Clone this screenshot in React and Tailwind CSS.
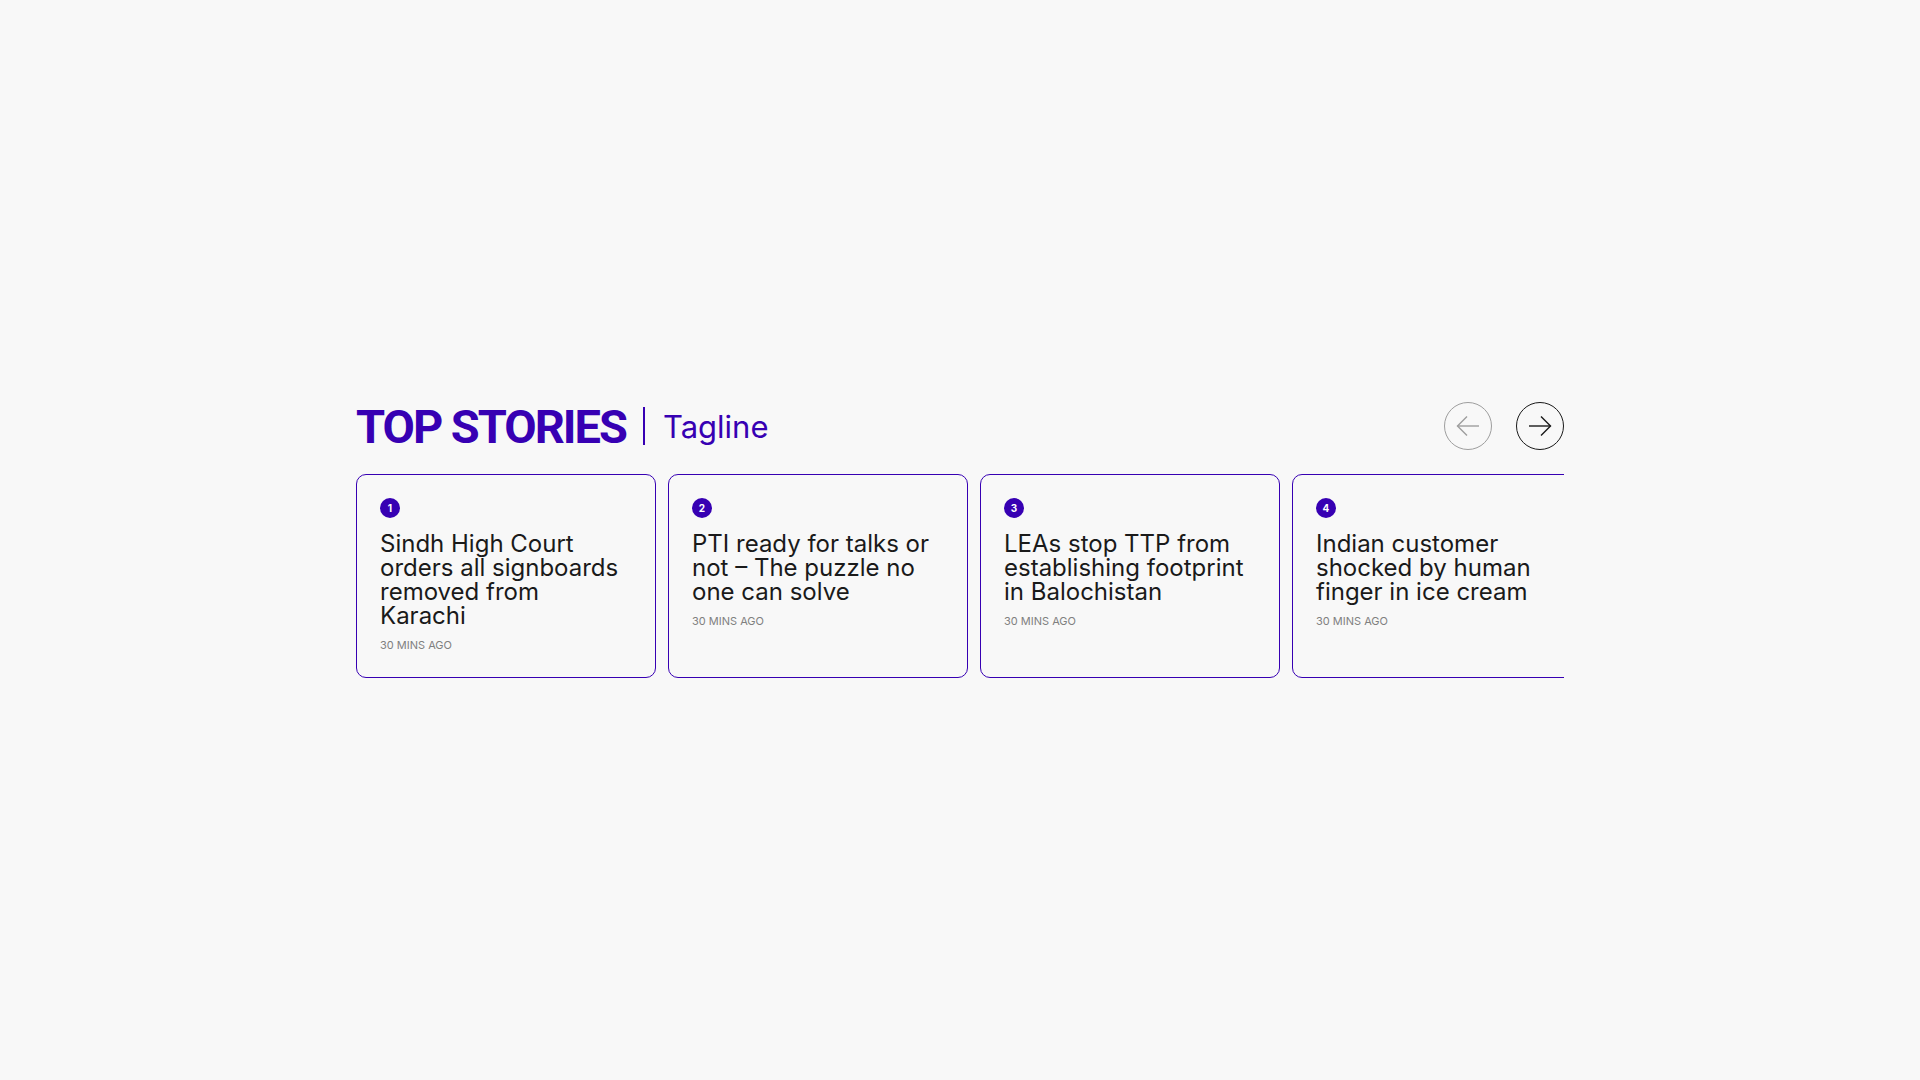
import React from "react";

const stories = [
  { n: 1, title: "Sindh High Court orders all signboards removed from Karachi" },
  { n: 2, title: "PTI ready for talks or not – The puzzle no one can solve" },
  { n: 3, title: "LEAs stop TTP from establishing footprint in Balochistan" },
  { n: 4, title: "Indian customer shocked by human finger in ice cream" },
];

function Arrow({ dir }) {
  return (
    <svg width="24" height="24" viewBox="0 0 24 24" fill="none" stroke="currentColor" strokeWidth="1.4" strokeLinecap="butt" strokeLinejoin="miter">
      {dir === "left" ? (
        <>
          <path d="M23 12H1.5" />
          <path d="M11 2.5L1.5 12l9.5 9.5" />
        </>
      ) : (
        <>
          <path d="M1 12h21.5" />
          <path d="M13 2.5l9.5 9.5-9.5 9.5" />
        </>
      )}
    </svg>
  );
}

export default function App() {
  return (
    <div className="min-h-screen w-full bg-[#f8f8f8] flex items-start justify-center" style={{ fontFamily: "Inter, 'Noto Sans', sans-serif" }}>
      <div className="w-[1208px] mt-[402px] flex flex-col gap-6">
        <div className="flex items-center justify-between h-12">
          <div className="flex items-center">
            <h2 className="text-[47px] leading-none font-bold text-[#3700b3] tracking-[-2px] uppercase" style={{ fontFamily: "Roboto, 'Liberation Sans', sans-serif" }}>
              Top Stories
            </h2>
            <div className="w-[2px] h-[38px] bg-[#3700b3] ml-[17px] mr-[18px]" />
            <span className="text-[31px] leading-none text-[#3700b3] font-normal">Tagline</span>
          </div>
          <div className="flex items-center gap-6">
            <button className="w-12 h-12 rounded-full border border-[#9e9e9e] flex items-center justify-center text-[#9e9e9e]">
              <Arrow dir="left" />
            </button>
            <button className="w-12 h-12 rounded-full border-[1.5px] border-[#1a1a1a] flex items-center justify-center text-[#1a1a1a]">
              <Arrow dir="right" />
            </button>
          </div>
        </div>
        <div className="overflow-hidden">
          <div className="flex gap-3 items-stretch">
            {stories.map((s) => (
              <div key={s.n} className="w-[300px] shrink-0 border border-[#3700b3] rounded-[10px] pl-[23px] pr-8 pt-[23px] pb-6 flex flex-col">
                <div className="w-5 h-5 rounded-full bg-[#3700b3] text-white text-[10px] font-bold flex items-center justify-center leading-none">
                  {s.n}
                </div>
                <h3 className="mt-[14px] text-[24px] leading-6 text-[#1a1a1a] font-normal">{s.title}</h3>
                <div className="mt-[9px] text-[11px] leading-4 text-[#808080] uppercase">30 mins ago</div>
              </div>
            ))}
          </div>
        </div>
      </div>
    </div>
  );
}
